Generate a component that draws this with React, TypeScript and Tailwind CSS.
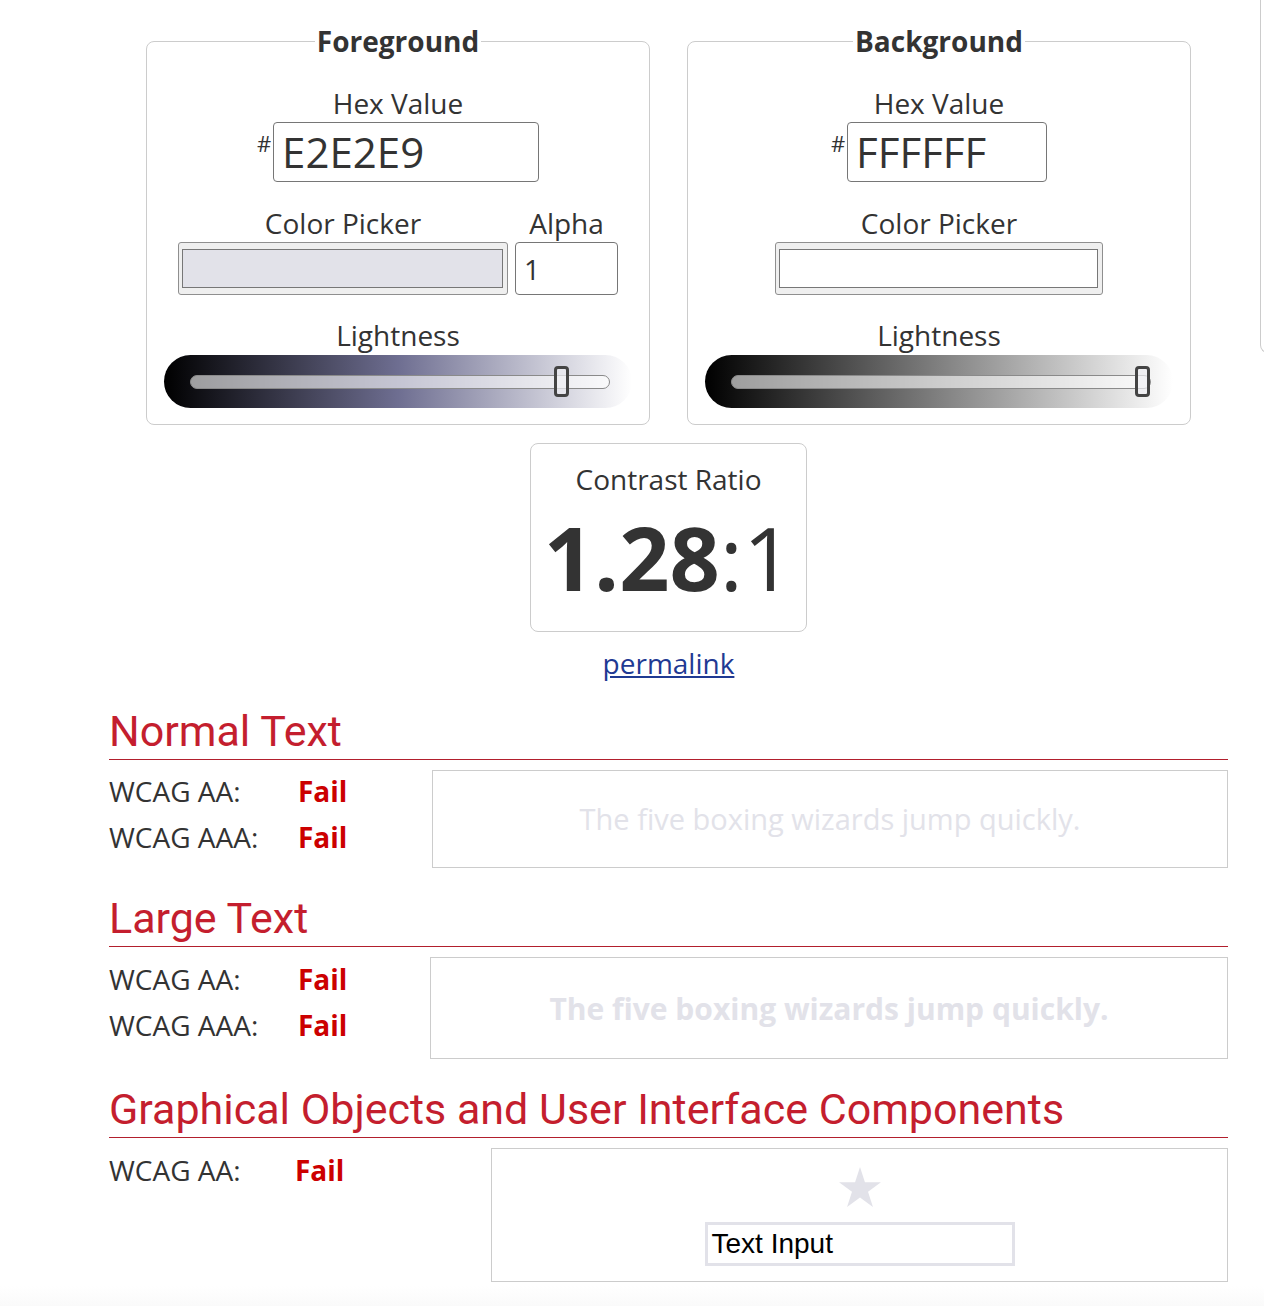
import React from "react";

function Slider({ band, pos }: { band: string; pos: number }) {
  return (
    <div className={`mt-[1px] w-[468px] h-[53px] rounded-full flex items-center pl-[26px] pr-[22px] ${band}`}>
      <div className="relative flex-1 h-[14px] rounded-full border border-[#8a8a8a] bg-white/60">
        <div
          className="absolute top-[-10px] w-[15px] h-[31px] rounded-[4px] border-[3px] border-[#444] bg-[#f0f0f4]/70"
          style={{ left: pos }}
        />
      </div>
    </div>
  );
}

function Row({ label, w }: { label: string; w: string }) {
  return (
    <div className="flex text-[28px] leading-[46px]">
      <span className={w}>{label}</span>
      <span className="font-bold text-[#cc0000]">Fail</span>
    </div>
  );
}

function Heading({ children, mt }: { children: React.ReactNode; mt: string }) {
  return (
    <h2
      className={`${mt} font-['Roboto',sans-serif] text-[43px] leading-[52px] text-[#c41e2e] border-b border-[#b21f2d] pb-[2px]`}
    >
      {children}
    </h2>
  );
}

export default function App() {
  return (
    <div className="w-[1264px] min-h-[1308px] overflow-hidden bg-white font-['Open_Sans',sans-serif] text-[#333]">
      <div className="flex gap-[32px]">
        <div className="ml-[109px] w-[1119px] shrink-0 pt-[22px]">
          {/* Top cards */}
          <div className="flex justify-center gap-[37px]">
            <fieldset className="w-[504px] border border-[#cccccc] rounded-[8px] pb-[16px] flex flex-col items-center">
              <legend className="mx-auto px-[2px] text-[28px] leading-[38px] font-bold">Foreground</legend>
              <div className="mt-[25px] text-[28px] leading-[37px]">Hex Value</div>
              <div className="flex items-start">
                <span className="mt-[10px] mr-[2px] text-[22px] leading-none">#</span>
                <div className="w-[266px] h-[60px] border border-[#767676] rounded-[4px] pl-[8px] flex items-center text-[42px] leading-none">
                  E2E2E9
                </div>
              </div>
              <div className="mt-[22px] flex gap-[7px]">
                <div className="flex flex-col items-center">
                  <div className="text-[28px] leading-[38px]">Color Picker</div>
                  <div className="w-[330px] h-[53px] rounded-[3px] border border-[#8f8f8f] bg-[#efefef] pl-[3px] pr-[4px] py-[6px]">
                    <div className="h-full border border-[#777] bg-[#e2e2e9]" />
                  </div>
                </div>
                <div className="flex flex-col items-center">
                  <div className="text-[28px] leading-[38px]">Alpha</div>
                  <div className="w-[103px] h-[53px] border border-[#767676] rounded-[4px] pl-[8px] flex items-center text-[28px] leading-none">
                    1
                  </div>
                </div>
              </div>
              <div className="mt-[21px] text-[28px] leading-[38px]">Lightness</div>
              <Slider band="bg-[linear-gradient(to_right,#000000,#6e6e91,#ffffff)]" pos={363} />
            </fieldset>

            <fieldset className="w-[504px] border border-[#cccccc] rounded-[8px] pb-[16px] flex flex-col items-center">
              <legend className="mx-auto px-[2px] text-[28px] leading-[38px] font-bold">Background</legend>
              <div className="mt-[25px] text-[28px] leading-[37px]">Hex Value</div>
              <div className="flex items-start">
                <span className="mt-[10px] mr-[2px] text-[22px] leading-none">#</span>
                <div className="w-[200px] h-[60px] border border-[#767676] rounded-[4px] pl-[8px] flex items-center text-[42px] leading-none">
                  FFFFFF
                </div>
              </div>
              <div className="mt-[22px] flex flex-col items-center">
                <div className="text-[28px] leading-[38px]">Color Picker</div>
                <div className="w-[328px] h-[53px] rounded-[3px] border border-[#8f8f8f] bg-[#efefef] pl-[3px] pr-[4px] py-[6px]">
                  <div className="h-full border border-[#777] bg-white" />
                </div>
              </div>
              <div className="mt-[21px] text-[28px] leading-[38px]">Lightness</div>
              <Slider band="bg-[linear-gradient(to_right,#000000,#808080,#ffffff)]" pos={403} />
            </fieldset>
          </div>

          {/* Contrast ratio */}
          <div className="mt-[18px] mx-auto w-[277px] h-[189px] border border-[#cccccc] rounded-[8px] pt-[16px] flex flex-col items-center">
            <div className="text-[28px] leading-[38px]">Contrast Ratio</div>
            <div className="mt-[15px] text-[88px] leading-none">
              <span className="font-bold">1.28</span>:1
            </div>
          </div>
          <div className="mt-[12px] text-center text-[28px] leading-[38px]">
            <a className="text-[#1f3a93] underline">permalink</a>
          </div>

          {/* Normal text */}
          <Heading mt="mt-[23px]">Normal Text</Heading>
          <div className="mt-[10px] flex items-start">
            <div className="w-[323px] shrink-0 -mt-[2px]">
              <Row label="WCAG AA:" w="w-[189px]" />
              <Row label="WCAG AAA:" w="w-[189px]" />
            </div>
            <div className="flex-1 h-[98px] border border-[#cccccc] flex items-center justify-center text-[29px] text-[#e2e2e9]">
              The five boxing wizards jump quickly.
            </div>
          </div>

          {/* Large text */}
          <Heading mt="mt-[24px]">Large Text</Heading>
          <div className="mt-[10px] flex items-start">
            <div className="w-[321px] shrink-0 -mt-[1px]">
              <Row label="WCAG AA:" w="w-[189px]" />
              <Row label="WCAG AAA:" w="w-[189px]" />
            </div>
            <div className="flex-1 h-[102px] border border-[#cccccc] flex items-center justify-center text-[30px] font-bold text-[#e2e2e9]">
              The five boxing wizards jump quickly.
            </div>
          </div>

          {/* Graphical */}
          <Heading mt="mt-[24px]">Graphical Objects and User Interface Components</Heading>
          <div className="mt-[10px] flex items-start">
            <div className="w-[382px] shrink-0 -mt-[1px]">
              <Row label="WCAG AA:" w="w-[186px]" />
            </div>
            <div className="flex-1 h-[134px] border border-[#cccccc] pt-[18px] flex flex-col items-center">
              <svg width="44" height="42" viewBox="0 0 100 95" className="block">
                <polygon
                  points="50,0 61.2,34.5 97.6,34.5 68.2,55.9 79.4,90.5 50,69.1 20.6,90.5 31.8,55.9 2.4,34.5 38.8,34.5"
                  fill="#e2e2e9"
                />
              </svg>
              <div className="mt-[13px] w-[310px] h-[44px] border-[3px] border-[#e2e2e9] pl-[4px] flex items-center font-['Liberation_Sans',Arial,sans-serif] text-[28px] text-black leading-none">
                Text Input
              </div>
            </div>
          </div>
        </div>
        <div className="w-[60px] h-[353px] shrink-0 border-l border-b border-[#cccccc] rounded-bl-[8px]" />
      </div>
      <div className="mt-[4px] h-[20px] bg-[linear-gradient(to_bottom,#ffffff,#fafafa)]" />
    </div>
  );
}
